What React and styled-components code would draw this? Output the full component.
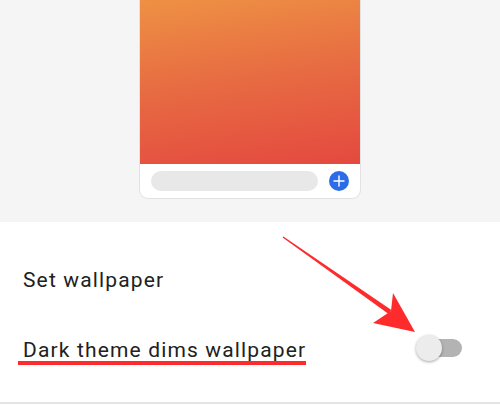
import React from "react";
import styled, { createGlobalStyle } from "styled-components";

const Global = createGlobalStyle`
  html, body { margin: 0; padding: 0; background: #ffffff; }
  #root { width: 500px; height: 406px; overflow: hidden; }
  * { box-sizing: border-box; }
`;

const Page = styled.div`
  position: relative;
  width: 500px;
  height: 406px;
  display: flex;
  flex-direction: column;
  font-family: Roboto, "Noto Sans", sans-serif;
  background: #ffffff;
`;

const Preview = styled.section`
  height: 222px;
  flex: none;
  background: #f5f5f5;
  display: flex;
  align-items: flex-end;
  justify-content: center;
  padding-bottom: 23px;
`;

const Card = styled.div`
  width: 222px;
  display: flex;
  flex-direction: column;
  border: 1px solid #e2e2e2;
  border-top: none;
  border-radius: 0 0 9px 9px;
  overflow: hidden;
  background: #ffffff;
`;

const Wallpaper = styled.div`
  height: 165px;
  background: linear-gradient(172deg, #ee9144 0%, #e76a42 50%, #e4493f 100%);
`;

const Composer = styled.div`
  height: 34px;
  display: flex;
  align-items: center;
  gap: 11px;
  padding: 0 11px 0 11px;
`;

const InputPill = styled.div`
  flex: 1;
  height: 20px;
  border-radius: 10px;
  background: #e8e8e8;
`;

const AddButton = styled.div`
  width: 20px;
  height: 20px;
  border-radius: 50%;
  background: #2c6ce8;
  display: flex;
  align-items: center;
  justify-content: center;
`;

const Settings = styled.section`
  flex: 1;
  display: flex;
  flex-direction: column;
  padding-top: 23px;
  border-bottom: 2px solid #e4e4e4;
  margin-bottom: 2px;
`;

const Row = styled.div`
  height: 70px;
  display: flex;
  align-items: center;
  justify-content: space-between;
  padding: 0 38px 0 23px;
`;

const Label = styled.span`
  position: relative;
  font-size: 21px;
  line-height: 24px;
  color: #212121;
  letter-spacing: 1.15px;
  ${(p) =>
    p.$marked &&
    `
    &::after {
      content: "";
      position: absolute;
      left: -5px;
      right: 0px;
      top: 23px;
      height: 3.5px;
      background: #fd2b2b;
    }
  `}
`;

const Toggle = styled.div`
  position: relative;
  width: 46px;
  height: 28px;
  margin-top: -4px;
`;

const Track = styled.div`
  position: absolute;
  right: 0;
  top: 5px;
  width: 42px;
  height: 18px;
  border-radius: 9px;
  background: #b3b3b3;
`;

const Thumb = styled.div`
  position: absolute;
  left: 0;
  top: 1px;
  width: 26px;
  height: 26px;
  border-radius: 50%;
  background: #ececec;
  box-shadow: 0 1px 3px rgba(0, 0, 0, 0.35);
`;

const Annotation = styled.svg`
  position: absolute;
  left: 0;
  top: 0;
  width: 500px;
  height: 406px;
  pointer-events: none;
`;

export default function App() {
  return (
    <>
      <Global />
      <Page>
        <Preview>
          <Card>
            <Wallpaper />
            <Composer>
              <InputPill />
              <AddButton>
                <svg width="12" height="12" viewBox="0 0 12 12">
                  <path d="M6 1v10M1 6h10" stroke="#ffffff" strokeWidth="1.4" strokeLinecap="round" />
                </svg>
              </AddButton>
            </Composer>
          </Card>
        </Preview>
        <Settings>
          <Row>
            <Label>Set wallpaper</Label>
          </Row>
          <Row>
            <Label $marked>Dark theme dims wallpaper</Label>
            <Toggle>
              <Track />
              <Thumb />
            </Toggle>
          </Row>
        </Settings>
        <Annotation viewBox="0 0 500 406">
          <polygon
            points="283.4,236.4 391.4,310.0 388.6,314.0 282.6,237.6"
            fill="#fd2b2b"
          />
          <polygon points="415,332 393,293 391,311 373,323" fill="#fd2b2b" />
        </Annotation>
      </Page>
    </>
  );
}
